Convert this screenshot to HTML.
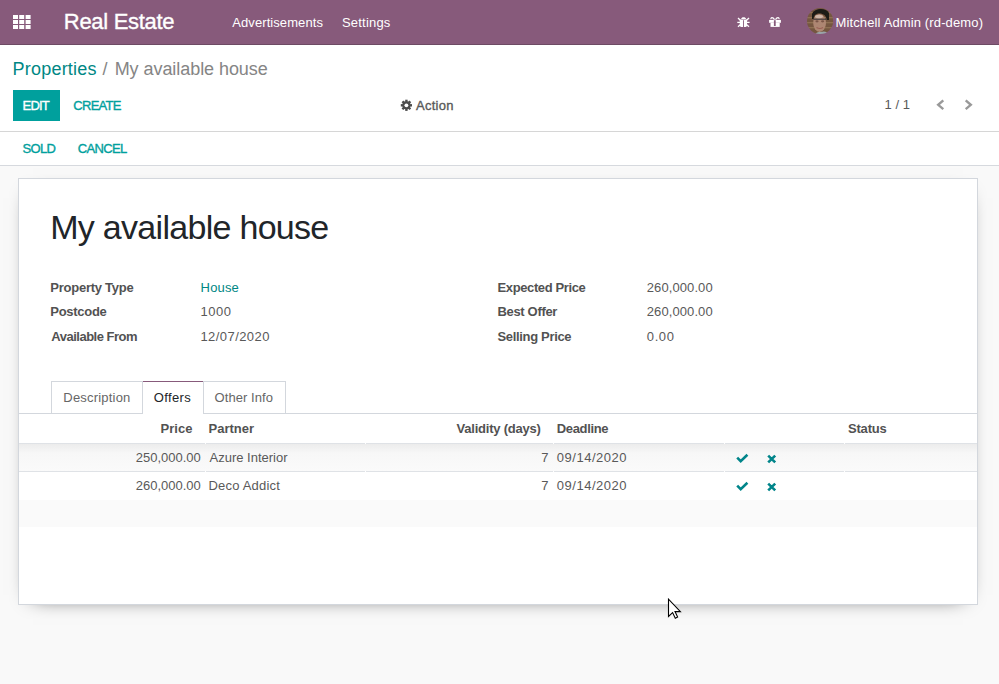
<!DOCTYPE html>
<html>
<head>
<meta charset="utf-8">
<style>
html,body{margin:0;padding:0;width:999px;height:684px;overflow:hidden;background:#f9f9f9;font-family:"Liberation Sans",sans-serif;}
.a{position:absolute;}
.t{position:absolute;white-space:nowrap;font-family:"Liberation Sans",sans-serif;}
</style>
</head>
<body>
<!-- navbar -->
<div class="a" style="left:0;top:0;width:999px;height:44px;background:#875a7b;"></div>
<div class="a" style="left:0;top:44px;width:999px;height:1px;background:#6d4a64;"></div>
<!-- control panel -->
<div class="a" style="left:0;top:45px;width:999px;height:86px;background:#fff;"></div>
<div class="a" style="left:0;top:131px;width:999px;height:1px;background:#d6d6d6;"></div>
<!-- statusbar -->
<div class="a" style="left:0;top:132px;width:999px;height:33px;background:#fff;"></div>
<div class="a" style="left:0;top:165px;width:999px;height:1px;background:#d6d9de;"></div>
<!-- sheet -->
<div class="a" style="left:18px;top:178px;width:958px;height:425px;background:#fff;border:1px solid #d3d7dd;box-shadow:0 5px 20px -15px #000;"></div>

<!-- grid icon -->
<svg class="a" style="left:0;top:0" width="60" height="44">
<g fill="#fff">
<rect x="13" y="15" width="5" height="4"/><rect x="19.2" y="15" width="5" height="4"/><rect x="25.6" y="15" width="5" height="4"/>
<rect x="13" y="20" width="5" height="4"/><rect x="19.2" y="20" width="5" height="4"/><rect x="25.6" y="20" width="5" height="4"/>
<rect x="13" y="25" width="5" height="4"/><rect x="19.2" y="25" width="5" height="4"/><rect x="25.6" y="25" width="5" height="4"/>
</g></svg>

<!-- bug icon -->
<svg class="a" style="left:730px;top:10px" width="60" height="24">
<g fill="#fff" stroke="none">
<path d="M11.2 8.9 C11.2 6.6 16 6.6 16 8.9 Z"/>
<path d="M9.8 9.6 H17 V15.6 Q17 17 15.6 17 H11.2 Q9.8 17 9.8 15.6 Z"/>
</g>
<g stroke="#fff" stroke-width="1.3" fill="none">
<path d="M8 8 L10.3 10.3"/><path d="M19 8 L16.6 10.3"/>
<path d="M7.3 12.4 H10"/><path d="M19.6 12.4 H17"/>
<path d="M8 16.8 L10.2 14.8"/><path d="M19 16.8 L16.8 14.8"/>
</g>
<rect x="13.1" y="10.2" width="0.9" height="6.8" fill="#875a7b"/>
<!-- gift -->
<g fill="#fff">
<path d="M39.1 9.9 H50.9 V12.8 H39.1 Z"/>
<path d="M40.5 12.8 H49.7 V16.9 H40.5 Z"/>
</g>
<g stroke="#fff" stroke-width="1.2" fill="none">
<path d="M44.5 9.6 C43 7 40.5 7.2 41 9.2"/>
<path d="M45.5 9.6 C47 7 49.5 7.2 49 9.2"/>
</g>
<rect x="43.9" y="10.2" width="1.8" height="5.8" fill="#875a7b"/>
</svg>

<!-- avatar -->
<svg class="a" style="left:806px;top:7px" width="28" height="28">
<defs><clipPath id="cc"><circle cx="14.1" cy="14" r="13.1"/></clipPath>
<filter id="bl" x="-10%" y="-10%" width="120%" height="120%"><feGaussianBlur stdDeviation="0.5"/></filter></defs>
<g clip-path="url(#cc)"><g filter="url(#bl)">
<rect width="28" height="28" fill="#75573f"/>
<rect x="0" y="5" width="28" height="1.3" fill="#a0805f" opacity=".6"/>
<rect x="0" y="10" width="28" height="1.3" fill="#a0805f" opacity=".6"/>
<rect x="0" y="15" width="28" height="1.3" fill="#a0805f" opacity=".6"/>
<rect x="0" y="20" width="28" height="1.3" fill="#a0805f" opacity=".6"/>
<path d="M6 7 C8 1 20 0 23 6 L23 13 L21 13 C20 8 17 6 12 6.5 C9 7 8 9 7.5 12 L6 12 Z" fill="#1f1a17"/>
<ellipse cx="13.6" cy="16" rx="6.4" ry="9" fill="#ad8672"/>
<ellipse cx="13" cy="9.6" rx="4" ry="1.8" fill="#cdb6a8"/>
<path d="M7.5 12.2 H20.5" stroke="#333" stroke-width="1"/>
<ellipse cx="11" cy="14.3" rx="1.6" ry="1.1" fill="#7a5546"/>
<ellipse cx="16.6" cy="14.3" rx="1.6" ry="1.1" fill="#7a5546"/>
<path d="M10.5 20.5 Q14 22.5 17 20.5" stroke="#9a6055" stroke-width="1.2" fill="none"/>
<path d="M8 28 Q12 24 15 25 Q20 23 24 28 Z" fill="#9aa4a8"/>
</g></g>
</svg>

<!-- EDIT button -->
<div class="a" style="left:13px;top:90px;width:47px;height:31px;background:#00a09d;"></div>

<!-- gear -->
<svg class="a" style="left:398px;top:97px" width="16" height="16">
<g transform="translate(8.4,8.3)" fill="#4c4c4c">
<circle r="4.1"/>
<g id="tooth"><rect x="-1.2" y="-5.6" width="2.4" height="3"/></g>
<use href="#tooth" transform="rotate(45)"/><use href="#tooth" transform="rotate(90)"/><use href="#tooth" transform="rotate(135)"/>
<use href="#tooth" transform="rotate(180)"/><use href="#tooth" transform="rotate(225)"/><use href="#tooth" transform="rotate(270)"/><use href="#tooth" transform="rotate(315)"/>
<circle r="1.9" fill="#fff"/>
</g></svg>

<!-- pager chevrons -->
<svg class="a" style="left:930px;top:95px" width="50" height="20">
<path d="M13.3 5.4 L8.2 9.8 L13.3 14.2" stroke="#999" stroke-width="2.4" fill="none"/>
<path d="M35.7 5.4 L40.8 9.8 L35.7 14.2" stroke="#999" stroke-width="2.4" fill="none"/>
</svg>

<!-- tabs -->
<div class="a" style="left:19px;top:413px;width:958px;height:1px;background:#d3d7dd;"></div>
<div class="a" style="left:51px;top:381px;width:1px;height:32px;background:#d3d7dd;"></div>
<div class="a" style="left:51px;top:381px;width:91px;height:1px;background:#d3d7dd;"></div>
<div class="a" style="left:142px;top:381px;width:1px;height:32px;background:#d3d7dd;"></div>
<div class="a" style="left:143px;top:381px;width:60px;height:1px;background:#875a7b;"></div>
<div class="a" style="left:143px;top:413px;width:60px;height:1px;background:#fff;"></div>
<div class="a" style="left:203px;top:381px;width:1px;height:32px;background:#d3d7dd;"></div>
<div class="a" style="left:204px;top:381px;width:81px;height:1px;background:#d3d7dd;"></div>
<div class="a" style="left:285px;top:381px;width:1px;height:32px;background:#d3d7dd;"></div>

<!-- table -->
<div class="a" style="left:19px;top:443px;width:958px;height:1px;background:#dfe2e6;"></div>
<div class="a" style="left:19px;top:444px;width:958px;height:27px;background:linear-gradient(#ececec,#f7f7f7 9px,#fafafa);"></div>
<div class="a" style="left:19px;top:471px;width:958px;height:1px;background:#dfe2e6;"></div>
<div class="a" style="left:19px;top:500px;width:958px;height:27px;background:#fafafa;"></div>
<!-- column separators -->
<div class="a" style="left:205px;top:443px;width:1px;height:1px;background:#fff;"></div>
<div class="a" style="left:365px;top:443px;width:1px;height:1px;background:#fff;"></div>
<div class="a" style="left:553px;top:443px;width:1px;height:1px;background:#fff;"></div>
<div class="a" style="left:724px;top:443px;width:1px;height:1px;background:#fff;"></div>
<div class="a" style="left:844px;top:443px;width:1px;height:1px;background:#fff;"></div>
<div class="a" style="left:205px;top:471px;width:1px;height:1px;background:#fff;"></div>
<div class="a" style="left:365px;top:471px;width:1px;height:1px;background:#fff;"></div>
<div class="a" style="left:553px;top:471px;width:1px;height:1px;background:#fff;"></div>
<div class="a" style="left:724px;top:471px;width:1px;height:1px;background:#fff;"></div>
<div class="a" style="left:844px;top:471px;width:1px;height:1px;background:#fff;"></div>

<!-- row icons -->
<svg class="a" style="left:730px;top:448px" width="56" height="50">
<g stroke="#01858a" stroke-width="2.6" fill="none" stroke-linecap="butt">
<path d="M7.2 9.6 L10.7 13.1 L17.4 6.8"/>
<path d="M38.2 7.6 L45.2 14.4 M45.2 7.6 L38.2 14.4"/>
<path d="M7.2 37.6 L10.7 41.1 L17.4 34.8"/>
<path d="M38.2 35.6 L45.2 42.4 M45.2 35.6 L38.2 42.4"/>
</g></svg>

<div class="t" style="left:63.80px;top:11.30px;font-size:22px;line-height:22px;font-weight:400;color:#fff;letter-spacing:-0.300px;-webkit-text-stroke:0.35px #fff;">Real Estate</div>
<div class="t" style="left:232.30px;top:16.00px;font-size:13px;line-height:13px;font-weight:400;color:#fff;letter-spacing:0.077px;">Advertisements</div>
<div class="t" style="left:342.00px;top:16.00px;font-size:13px;line-height:13px;font-weight:400;color:#fff;letter-spacing:0.200px;">Settings</div>
<div class="t" style="left:835.50px;top:16.00px;font-size:13px;line-height:13px;font-weight:400;color:#fff;letter-spacing:0.130px;">Mitchell Admin (rd-demo)</div>
<div class="t" style="left:12.50px;top:60.30px;font-size:18px;line-height:18px;font-weight:400;color:#008784;letter-spacing:0.222px;">Properties</div>
<div class="t" style="left:102.60px;top:60.30px;font-size:18px;line-height:18px;font-weight:400;color:#858585;letter-spacing:0.000px;">/</div>
<div class="t" style="left:114.70px;top:60.30px;font-size:18px;line-height:18px;font-weight:400;color:#858585;letter-spacing:-0.059px;">My available house</div>
<div class="t" style="left:22.60px;top:99.00px;font-size:13px;line-height:13px;font-weight:400;color:#fff;letter-spacing:-0.800px;-webkit-text-stroke:0.35px #fff;">EDIT</div>
<div class="t" style="left:73.30px;top:99.00px;font-size:13px;line-height:13px;font-weight:400;color:#00a09d;letter-spacing:-0.720px;-webkit-text-stroke:0.35px #00a09d;">CREATE</div>
<div class="t" style="left:416.00px;top:99.00px;font-size:13px;line-height:13px;font-weight:400;color:#595959;letter-spacing:0.280px;-webkit-text-stroke:0.35px #595959;">Action</div>
<div class="t" style="left:884.60px;top:98.00px;font-size:13px;line-height:13px;font-weight:400;color:#595959;letter-spacing:0.000px;">1 / 1</div>
<div class="t" style="left:22.50px;top:142.00px;font-size:13px;line-height:13px;font-weight:400;color:#00a09d;letter-spacing:-0.667px;-webkit-text-stroke:0.35px #00a09d;">SOLD</div>
<div class="t" style="left:77.80px;top:142.00px;font-size:13px;line-height:13px;font-weight:400;color:#00a09d;letter-spacing:-0.640px;-webkit-text-stroke:0.35px #00a09d;">CANCEL</div>
<div class="t" style="left:50.20px;top:210.00px;font-size:34px;line-height:34px;font-weight:400;color:#212529;letter-spacing:-0.706px;">My available house</div>
<div class="t" style="left:50.30px;top:281.00px;font-size:13px;line-height:13px;font-weight:700;color:#525252;letter-spacing:-0.250px;">Property Type</div>
<div class="t" style="left:50.30px;top:305.00px;font-size:13px;line-height:13px;font-weight:700;color:#525252;letter-spacing:-0.286px;">Postcode</div>
<div class="t" style="left:51.30px;top:330.00px;font-size:13px;line-height:13px;font-weight:700;color:#525252;letter-spacing:-0.492px;">Available From</div>
<div class="t" style="left:200.60px;top:281.00px;font-size:13px;line-height:13px;font-weight:400;color:#008784;letter-spacing:0.150px;">House</div>
<div class="t" style="left:200.40px;top:305.00px;font-size:13px;line-height:13px;font-weight:400;color:#595959;letter-spacing:0.533px;">1000</div>
<div class="t" style="left:200.40px;top:330.00px;font-size:13px;line-height:13px;font-weight:400;color:#595959;letter-spacing:0.444px;">12/07/2020</div>
<div class="t" style="left:497.50px;top:281.00px;font-size:13px;line-height:13px;font-weight:700;color:#525252;letter-spacing:-0.385px;">Expected Price</div>
<div class="t" style="left:497.50px;top:305.00px;font-size:13px;line-height:13px;font-weight:700;color:#525252;letter-spacing:-0.333px;">Best Offer</div>
<div class="t" style="left:497.50px;top:330.00px;font-size:13px;line-height:13px;font-weight:700;color:#525252;letter-spacing:-0.333px;">Selling Price</div>
<div class="t" style="left:646.80px;top:281.00px;font-size:13px;line-height:13px;font-weight:400;color:#595959;letter-spacing:0.089px;">260,000.00</div>
<div class="t" style="left:646.80px;top:305.00px;font-size:13px;line-height:13px;font-weight:400;color:#595959;letter-spacing:0.089px;">260,000.00</div>
<div class="t" style="left:646.80px;top:330.00px;font-size:13px;line-height:13px;font-weight:400;color:#595959;letter-spacing:0.600px;">0.00</div>
<div class="t" style="left:63.30px;top:391.00px;font-size:13px;line-height:13px;font-weight:400;color:#666;letter-spacing:0.200px;">Description</div>
<div class="t" style="left:153.80px;top:391.00px;font-size:13px;line-height:13px;font-weight:400;color:#212529;letter-spacing:0.360px;">Offers</div>
<div class="t" style="left:214.60px;top:391.00px;font-size:13px;line-height:13px;font-weight:400;color:#666;letter-spacing:0.067px;">Other Info</div>
<div class="t" style="left:160.60px;top:422.00px;font-size:13px;line-height:13px;font-weight:700;color:#525252;letter-spacing:0.000px;">Price</div>
<div class="t" style="left:208.50px;top:422.00px;font-size:13px;line-height:13px;font-weight:700;color:#525252;letter-spacing:0.000px;">Partner</div>
<div class="t" style="left:456.60px;top:422.00px;font-size:13px;line-height:13px;font-weight:700;color:#525252;letter-spacing:-0.229px;">Validity (days)</div>
<div class="t" style="left:556.80px;top:422.00px;font-size:13px;line-height:13px;font-weight:700;color:#525252;letter-spacing:-0.343px;">Deadline</div>
<div class="t" style="left:848.00px;top:422.00px;font-size:13px;line-height:13px;font-weight:700;color:#525252;letter-spacing:-0.200px;">Status</div>
<div class="t" style="left:135.80px;top:451.00px;font-size:13px;line-height:13px;font-weight:400;color:#595959;letter-spacing:-0.022px;">250,000.00</div>
<div class="t" style="left:209.50px;top:451.00px;font-size:13px;line-height:13px;font-weight:400;color:#595959;letter-spacing:0.000px;">Azure Interior</div>
<div class="t" style="left:541.20px;top:451.00px;font-size:13px;line-height:13px;font-weight:400;color:#595959;letter-spacing:0.000px;">7</div>
<div class="t" style="left:556.80px;top:451.00px;font-size:13px;line-height:13px;font-weight:400;color:#595959;letter-spacing:0.511px;">09/14/2020</div>
<div class="t" style="left:135.80px;top:479.00px;font-size:13px;line-height:13px;font-weight:400;color:#595959;letter-spacing:-0.022px;">260,000.00</div>
<div class="t" style="left:208.50px;top:479.00px;font-size:13px;line-height:13px;font-weight:400;color:#595959;letter-spacing:0.200px;">Deco Addict</div>
<div class="t" style="left:541.20px;top:479.00px;font-size:13px;line-height:13px;font-weight:400;color:#595959;letter-spacing:0.000px;">7</div>
<div class="t" style="left:556.80px;top:479.00px;font-size:13px;line-height:13px;font-weight:400;color:#595959;letter-spacing:0.511px;">09/14/2020</div>

<!-- cursor -->
<svg class="a" style="left:667px;top:598px" width="16" height="22">
<path d="M1.5 1.2 L1.5 18.5 L5.6 14.6 L8.3 20.2 L10.6 19.1 L8 13.6 L13.4 13.6 Z" fill="#fff" stroke="#000" stroke-width="1.1" stroke-linejoin="miter"/>
</svg>
</body>
</html>
